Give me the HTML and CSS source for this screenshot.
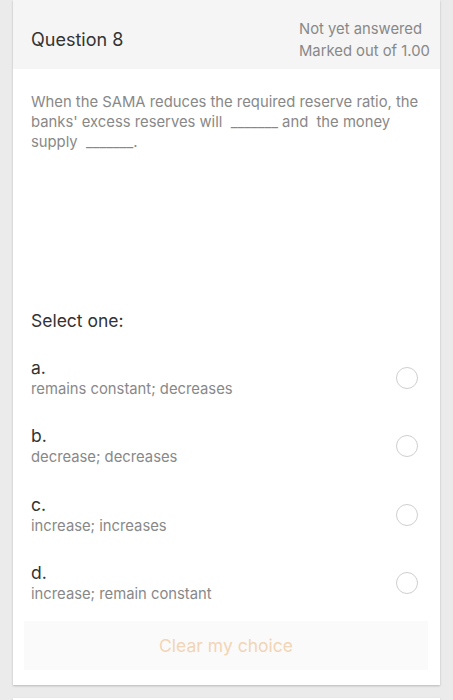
FILE: index.html
```html
<!DOCTYPE html>
<html>
<head>
<meta charset="utf-8">
<link rel="stylesheet" href="styles.css">
</head>
<body>
<div class="page">
  <div class="card">
    <div class="card-head">
      <div class="qtitle">Question 8</div>
      <div class="qinfo">
        <div>Not yet answered</div>
        <div>Marked out of 1.00</div>
      </div>
    </div>
    <div class="card-body">
      <p class="qtext">When the SAMA reduces the required reserve ratio, the banks' excess reserves will &nbsp;_______ and&nbsp; the money supply &nbsp;_______.</p>
      <div class="prompt">Select one:</div>
      <div class="options">
        <div class="opt">
          <div class="opt-txt"><div class="letter">a.</div><div class="ans">remains constant; decreases</div></div>
          <span class="radio"></span>
        </div>
        <div class="opt">
          <div class="opt-txt"><div class="letter">b.</div><div class="ans">decrease; decreases</div></div>
          <span class="radio"></span>
        </div>
        <div class="opt">
          <div class="opt-txt"><div class="letter">c.</div><div class="ans">increase; increases</div></div>
          <span class="radio"></span>
        </div>
        <div class="opt">
          <div class="opt-txt"><div class="letter">d.</div><div class="ans">increase; remain constant</div></div>
          <span class="radio"></span>
        </div>
      </div>
      <div class="clear">Clear my choice</div>
    </div>
  </div>
  <div class="card next"></div>
</div>
</body>
</html>
```
FILE: styles.css
```css
html, body { margin: 0; padding: 0; }
body {
  background: #ebebeb;
  font-family: Inter, "Open Sans", "Liberation Sans", sans-serif;
  width: 453px;
  height: 700px;
  overflow: hidden;
}
.page {
  padding: 0 13px;
  display: flex;
  flex-direction: column;
  gap: 13px;
}
.card {
  background: #fff;
  box-shadow: 0 1px 2px rgba(0,0,0,0.22);
}
.card-head {
  background: #f5f5f5;
  height: 69px;
  box-sizing: border-box;
  padding: 12px 8px 0 18px;
  display: flex;
  align-items: center;
  justify-content: space-between;
}
.qtitle {
  font-size: 18px;
  color: #333;
  margin-top: -2px;
}
.qinfo {
  font-size: 14.8px;
  color: #888;
  line-height: 22px;
  margin-top: -2px;
  width: 133px;
  white-space: nowrap;
}
.card-body {
  padding: 23px 12px 15px 11px;
}
.qtext {
  margin: 0 0 0 7px;
  font-size: 14.8px;
  line-height: 20px;
  color: #888;
}
.prompt {
  margin: 158px 0 0 7px;
  font-size: 17.5px;
  line-height: 22px;
  color: #333;
}
.options {
  margin-top: 25px;
  display: flex;
  flex-direction: column;
  gap: 26.4px;
}
.opt {
  display: flex;
  align-items: center;
  justify-content: space-between;
  padding-left: 7px;
  padding-right: 10px;
}
.letter {
  font-size: 17.5px;
  line-height: 22px;
  color: #333;
}
.ans {
  font-size: 14.8px;
  line-height: 20px;
  color: #888;
}
.radio {
  border: 1px solid #cfcfcf;
  border-radius: 50%;
  box-sizing: border-box;
  width: 22px;
  height: 22px;
}
.clear {
  margin-top: 17px;
  height: 49px;
  background: #fafafa;
  display: flex;
  align-items: center;
  justify-content: center;
  font-size: 17.5px;
  color: #f2d5b6;
}
.next {
  height: 30px;
}
```
